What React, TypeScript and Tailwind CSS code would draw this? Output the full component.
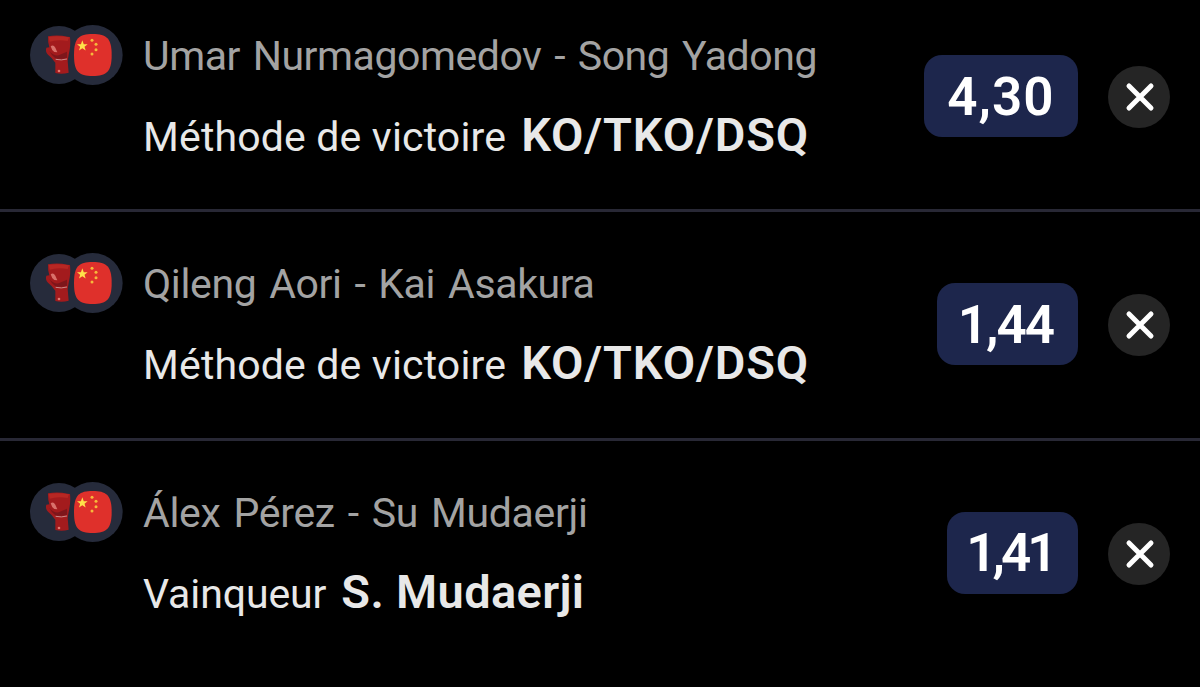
//Package imports
import clsx from "clsx";

const bets = [
  {
    match: "Umar Nurmagomedov - Song Yadong",
    matchTracking: "tracking-[-0.45px]",
    market: "Méthode de victoire",
    marketTracking: "tracking-[0.17px]",
    pick: "KO/TKO/DSQ",
    pickTracking: "tracking-[0.85px]",
    odds: "4,30",
    oddsStyle: "w-[154px] tracking-[1px]",
  },
  {
    match: "Qileng Aori - Kai Asakura",
    matchTracking: "tracking-[-0.35px]",
    market: "Méthode de victoire",
    marketTracking: "tracking-[0.17px]",
    pick: "KO/TKO/DSQ",
    pickTracking: "tracking-[0.85px]",
    odds: "1,44",
    oddsStyle: "w-[141px] pr-[4px] tracking-[-2px]",
  },
  {
    match: "Álex Pérez - Su Mudaerji",
    matchTracking: "tracking-[-0.3px]",
    market: "Vainqueur",
    marketTracking: "tracking-[-0.1px]",
    pick: "S. Mudaerji",
    pickTracking: "tracking-[0.35px]",
    odds: "1,41",
    oddsStyle: "w-[131px] pr-[5px] tracking-[-4px]",
  },
];

const star = "M0-17 4.2-5.5 16-5.3 6.6 2 10 13.8 0 7-10 13.8-6.6 2-16-5.3-4.2-5.5Z";

function SportIcon() {
  return (
    <svg className="block h-[60px] w-[94px]" viewBox="30 30 282 180" fill="none">
      <circle cx="117" cy="120" r="87" fill="#262b3b" />
      <circle cx="218" cy="120" r="90" fill="#262b3b" />
      {/* boxing glove */}
      <path d="M84 64Q112 58 143 65L150 66Q153 90 146 120L143 138L146 173Q126 179 106 174L106 143Q96 128 84 119Q75 110 79 98L88 97Q83 80 84 64Z" fill="#a31b1d" />
      <path d="M86 66Q112 61 147 67L143 78Q112 72 89 80Z" fill="#b72723" />
      <path d="M92 94Q100 88 106 98L112 112L103 111Q95 106 92 94Z" fill="#d9716b" />
      <path d="M88 108Q100 123 116 121L141 110L141 128Q120 134 106 130Q94 121 88 108Z" fill="#7d161b" />
      <path d="M107 133Q124 137 141 132" stroke="#c98a8a" strokeWidth="3" />
      <circle cx="117" cy="168" r="4" fill="#e37b72" />
      {/* flag */}
      <path d="M218 57C260 57 275 70 275 120S260 183 218 183S162 170 162 120S176 57 218 57Z" fill="#df302b" />
      <path d={star} transform="translate(187 93)" fill="#ffe14a" />
      <circle cx="216" cy="76" r="4.5" fill="#f6b93c" />
      <circle cx="228" cy="88" r="4.5" fill="#f6b93c" />
      <circle cx="228" cy="104" r="4.5" fill="#f6b93c" />
      <circle cx="216" cy="117" r="4.5" fill="#f6b93c" />
    </svg>
  );
}

function BetRow({ bet, last }: { bet: (typeof bets)[number]; last: boolean }) {
  return (
    <div
      className={clsx(
        "flex h-[228.3px] shrink-0 items-start px-[30px]",
        !last && "border-b-[3px] border-[#282835]"
      )}
    >
      <div className="mt-[41px]">
        <SportIcon />
      </div>
      <div className="ml-[19px] mt-[47px] grow whitespace-nowrap">
        <p className={clsx("text-[41px] leading-[50px] text-[#a3a3a3] [word-spacing:3px]", bet.matchTracking)}>
          {bet.match}
        </p>
        <p className="mt-[24px] flex items-baseline leading-[60px] text-[#e8e8e8]">
          <span className={clsx("text-[41px]", bet.marketTracking)}>{bet.market}</span>
          <span className={clsx("ml-[15px] text-[47px] font-semibold", bet.pickTracking)}>{bet.pick}</span>
        </p>
      </div>
      <div
        className={clsx(
          "mt-[71px] flex h-[82px] items-center justify-center rounded-[18px] bg-[#1d264c] pt-[3px] text-[53px] font-semibold text-white",
          bet.oddsStyle
        )}
      >
        {bet.odds}
      </div>
      <button className="ml-[30px] mt-[82px] flex size-[62px] items-center justify-center rounded-full bg-[#252525]">
        <svg className="size-[32px]" viewBox="0 0 32 32" fill="none" stroke="#fff" strokeWidth="5" strokeLinecap="round">
          <path d="M6 5 28 27M28 5 6 27" />
        </svg>
      </button>
    </div>
  );
}

function App() {
  return (
    <div className="h-[687px] w-[1200px] overflow-hidden bg-black font-['Roboto',sans-serif]">
      <div className="-mt-[16px] flex flex-col">
        {bets.map((bet, i) => (
          <BetRow key={bet.match} bet={bet} last={i === bets.length - 1} />
        ))}
      </div>
    </div>
  );
}

export default App;
